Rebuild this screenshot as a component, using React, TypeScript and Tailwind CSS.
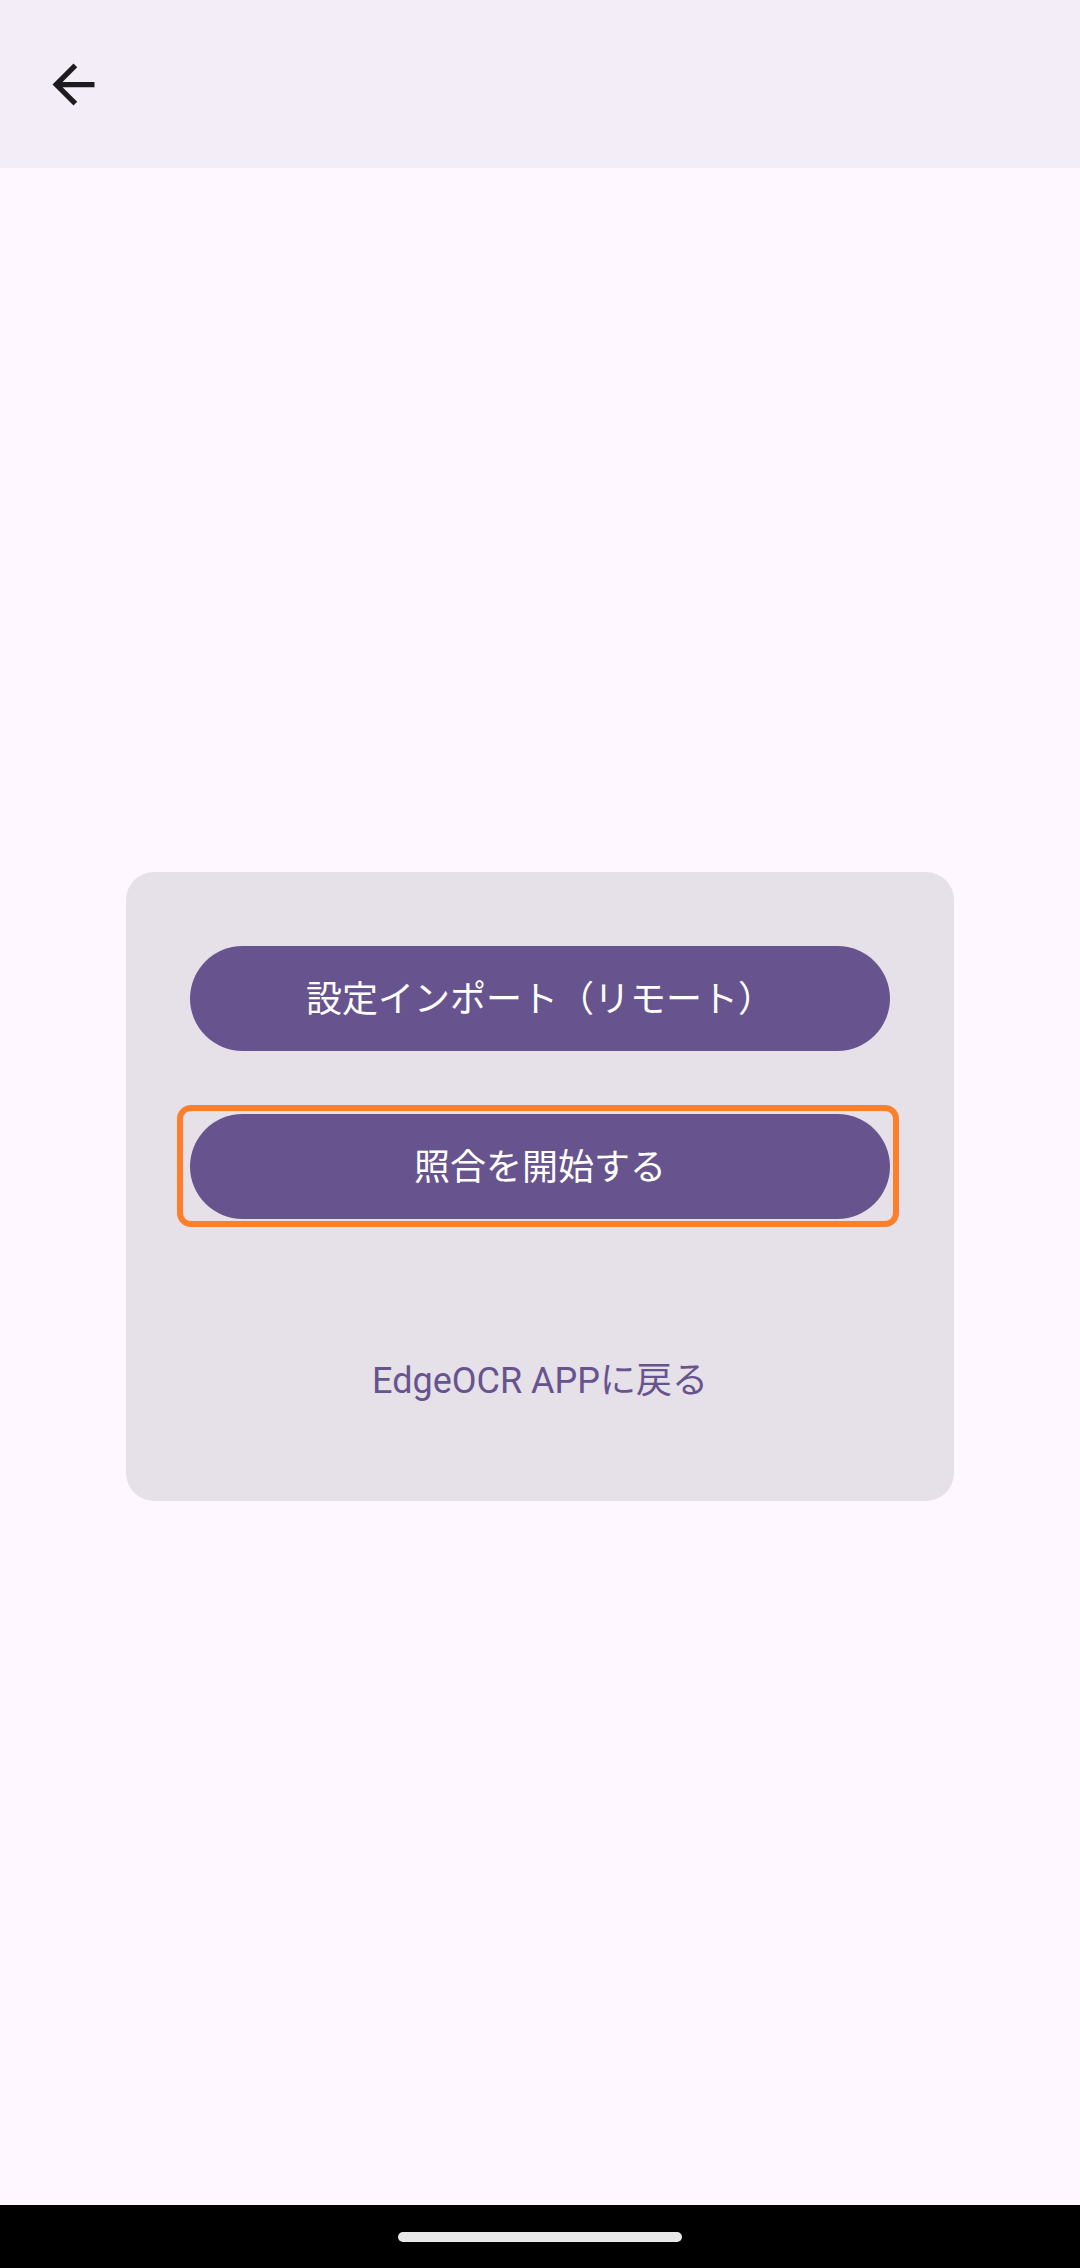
import React from "react";

export default function App() {
  return (
    <div
      className="w-[1080px] h-[2268px] flex flex-col bg-[#fef7ff]"
      style={{ fontFamily: 'Roboto, "Noto Sans CJK JP", sans-serif' }}
    >
      <header className="h-[168px] shrink-0 bg-[#f3edf7] flex items-center pl-[42px]">
        <svg width="63" height="63" viewBox="0 0 24 24" fill="#1d1b20">
          <path d="M20 11H7.83l5.59-5.59L12 4l-8 8 8 8 1.41-1.41L7.83 13H20v-2z" />
        </svg>
      </header>
      <main className="flex-1 flex items-center justify-center">
        <div className="w-[828px] h-[629px] bg-[#e6e0e9] rounded-[28px] px-[64px] pt-[74px] flex flex-col">
          <button className="h-[105px] w-full rounded-full bg-[#67548e] text-white text-[36px] pt-[3px] flex items-center justify-center">
            設定インポート（リモート）
          </button>
          <div className="relative mt-[63px]">
            <div className="absolute left-[-13px] right-[-9px] top-[-9px] bottom-[-8px] border-[6px] border-[#fe7f2a] rounded-[14px]" />
            <button className="relative h-[105px] w-full rounded-full bg-[#67548e] text-white text-[36px] pt-[3px] flex items-center justify-center">
              照合を開始する
            </button>
          </div>
          <div className="mt-[109px] h-[105px] flex items-center justify-center text-[#67548e] text-[36px]">
            EdgeOCR APPに戻る
          </div>
        </div>
      </main>
      <div className="h-[63px] shrink-0 bg-black flex items-center justify-center">
        <div className="w-[284px] h-[10px] rounded-full bg-[#e8e8e8]" />
      </div>
    </div>
  );
}
